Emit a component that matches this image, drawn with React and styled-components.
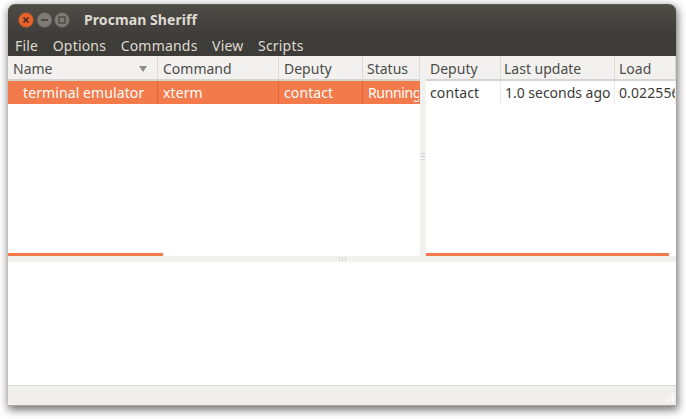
import styled, { createGlobalStyle } from 'styled-components';

const Global = createGlobalStyle`
  html, body {
    margin: 0;
    padding: 0;
    background: #fff;
    overflow: hidden;
  }
  * { box-sizing: border-box; }
`;

const Page = styled.div`
  width: 686px;
  height: 419px;
  padding: 4px 10px 13px 8px;
`;

const Win = styled.div`
  width: 668px;
  height: 402px;
  display: flex;
  flex-direction: column;
  background: #f2f1ef;
  border-radius: 7px 7px 0 0;
  box-shadow: 1px 3px 8px 1px rgba(0, 0, 0, 0.55);
  font-family: "Noto Sans", sans-serif;
  font-size: 14px;
`;

const TitleBar = styled.div`
  height: 30px;
  flex: none;
  display: flex;
  align-items: center;
  padding: 0 0 0 10px;
  background: linear-gradient(#4f4c47, #3f3e3a);
  border-top: 1px solid #5e5b55;
  border-radius: 7px 7px 0 0;
`;

const Controls = styled.svg`
  width: 52px;
  height: 18px;
  flex: none;
`;

const Title = styled.span`
  margin-left: 14px;
  color: #dfdbd2;
  font-weight: 700;
  font-size: 14px;
  letter-spacing: 0.08px;
`;

const MenuBar = styled.div`
  height: 22px;
  flex: none;
  display: flex;
  gap: 14.5px;
  align-items: center;
  padding: 0 0 0 7px;
  background: #3d3c38;
  color: #dfdbd2;
  letter-spacing: 0.2px;
`;

const TopSplit = styled.div`
  height: 200px;
  flex: none;
  display: flex;
`;

const Pane = styled.div`
  width: ${(p) => p.$width}px;
  flex: none;
  position: relative;
  overflow: hidden;
  background: #fff;
`;

const Row = styled.div`
  display: grid;
  grid-template-columns: ${(p) => p.$cols};
  height: ${(p) => p.$height}px;
  background: ${(p) => p.$fill || 'transparent'};
  color: ${(p) => p.$ink || '#3c3b37'};
`;

const HeadCell = styled.div`
  display: flex;
  align-items: center;
  justify-content: space-between;
  padding: 2px 10px 0 ${(p) => p.$indent || 5}px;
  background: #f2f1f0;
  color: #4c4c47;
  border-right: 1px solid #dcdad5;
  border-bottom: 2px solid #d6d4cf;
  white-space: nowrap;
  overflow: hidden;
`;

const Cell = styled.div`
  display: flex;
  align-items: center;
  padding-left: ${(p) => p.$indent || 5}px;
  white-space: nowrap;
  overflow: hidden;
  letter-spacing: ${(p) => p.$track || 0.1}px;
  border-right: 1px solid ${(p) => p.$rule || '#ecebe8'};
`;

const SortArrow = styled.i`
  width: 0;
  height: 0;
  flex: none;
  border-left: 4px solid transparent;
  border-right: 4px solid transparent;
  border-top: 6px solid #8e8c86;
`;

const ScrollBar = styled.div`
  position: absolute;
  left: 0;
  bottom: 0;
  width: ${(p) => p.$width}px;
  height: 3px;
  background: #f4794a;
`;

const VHandle = styled.div`
  width: 6px;
  flex: none;
  display: flex;
  flex-direction: column;
  justify-content: center;
  gap: 2px;
  padding: 0 1px;
  background: #f2f1ef;
`;

const VDot = styled.span`
  height: 1px;
  background: #d5d3ce;
`;

const HHandle = styled.div`
  height: 6px;
  flex: none;
  display: flex;
  justify-content: center;
  align-items: center;
  gap: 2px;
  background: #f2f1ef;
`;

const HDot = styled.span`
  width: 1px;
  height: 4px;
  background: #d5d3ce;
`;

const Output = styled.div`
  height: 124px;
  flex: none;
  background: #fff;
  border-bottom: 1px solid #d8d6d1;
`;

const StatusBar = styled.div`
  flex: 1;
  display: flex;
  justify-content: flex-end;
  align-items: flex-end;
  background: #f0efed;
  border-bottom: 1px solid #a9a7a2;
`;

const Grip = styled.svg`
  width: 11px;
  height: 11px;
  margin: 0 1px 1px 0;
`;

const leftCols = '150px 121px 84px 57px';
const rightCols = '75px 114px 61px';
const selected = '#f27a4b';

function WindowControls() {
  return (
    <Controls viewBox="0 0 52 18">
      <circle cx="8" cy="9" r="7.5" fill="#e8622c" stroke="#7a4a30" strokeWidth="0.6" />
      <path d="M5.5 6.5l5 5M10.5 6.5l-5 5" stroke="#3f2a20" strokeWidth="1.5" />
      <circle cx="26.5" cy="9" r="7.5" fill="#7d7b74" stroke="#55534e" strokeWidth="0.6" />
      <path d="M23 9h7" stroke="#3f3e3a" strokeWidth="1.6" />
      <circle cx="44" cy="9" r="7.5" fill="#7d7b74" stroke="#55534e" strokeWidth="0.6" />
      <rect x="41" y="6" width="6" height="6" fill="none" stroke="#45443f" strokeWidth="1.3" />
    </Controls>
  );
}

export default function App() {
  return (
    <Page>
      <Global />
      <Win>
        <TitleBar>
          <WindowControls />
          <Title>Procman Sheriff</Title>
        </TitleBar>
        <MenuBar>
          <span>File</span>
          <span>Options</span>
          <span>Commands</span>
          <span>View</span>
          <span>Scripts</span>
        </MenuBar>
        <TopSplit>
          <Pane $width={412}>
            <Row $cols={leftCols} $height={25}>
              <HeadCell>Name<SortArrow /></HeadCell>
              <HeadCell>Command</HeadCell>
              <HeadCell>Deputy</HeadCell>
              <HeadCell $indent={4}>Status</HeadCell>
            </Row>
            <Row $cols={leftCols} $height={23} $fill={selected} $ink="#fff">
              <Cell $indent={15} $rule="#e0693c">terminal emulator</Cell>
              <Cell $rule="#e0693c">xterm</Cell>
              <Cell $rule="#e0693c">contact</Cell>
              <Cell $rule={selected} $track={-0.35}>Running</Cell>
            </Row>
            <ScrollBar $width={155} />
          </Pane>
          <VHandle>
            <VDot />
            <VDot />
            <VDot />
          </VHandle>
          <Pane $width={250}>
            <Row $cols={rightCols} $height={25}>
              <HeadCell $indent={4}>Deputy</HeadCell>
              <HeadCell $indent={3}>Last update</HeadCell>
              <HeadCell $indent={4}>Load</HeadCell>
            </Row>
            <Row $cols={rightCols} $height={23}>
              <Cell $indent={4}>contact</Cell>
              <Cell $indent={4} $track={-0.02}>1.0 seconds ago</Cell>
              <Cell $indent={4}>0.022556</Cell>
            </Row>
            <ScrollBar $width={243} />
          </Pane>
        </TopSplit>
        <HHandle>
          <HDot />
          <HDot />
          <HDot />
        </HHandle>
        <Output />
        <StatusBar>
          <Grip viewBox="0 0 11 11">
            <g fill="#fff">
              <rect x="8" y="0" width="2" height="2" />
              <rect x="5" y="3" width="2" height="2" />
              <rect x="8" y="3" width="2" height="2" />
              <rect x="2" y="6" width="2" height="2" />
              <rect x="5" y="6" width="2" height="2" />
              <rect x="8" y="6" width="2" height="2" />
            </g>
          </Grip>
        </StatusBar>
      </Win>
    </Page>
  );
}
